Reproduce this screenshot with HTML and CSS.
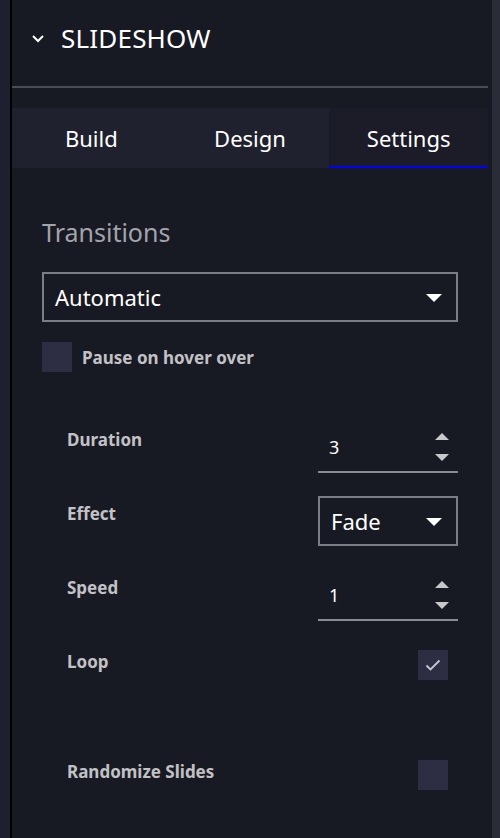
FILE: index.html
```html
<!DOCTYPE html>
<html lang="en">
<head>
    <meta charset="UTF-8">
    <meta name="viewport" content="width=device-width, initial-scale=1.0">
    <title>Slideshow</title>
    <link rel="stylesheet" href="styles.css">
</head>
<body>
    <div class="frame">
        <div class="rail"></div>
        <div class="panel">
            <div class="panel-header">
                <svg class="chevron" width="14" height="10" viewBox="0 0 14 10">
                    <path d="M2 2 L7 7 L12 2" fill="none" stroke="#fff" stroke-width="2"/>
                </svg>
                <span class="panel-title">SLIDESHOW</span>
            </div>
            <div class="divider"></div>

            <div class="tabs">
                <div class="tab">Build</div>
                <div class="tab">Design</div>
                <div class="tab active">Settings</div>
            </div>

            <div class="content">
                <h2 class="section-title">Transitions</h2>

                <div class="select wide">
                    <span>Automatic</span>
                    <span class="caret"></span>
                </div>

                <label class="check-line">
                    <span class="box"></span>
                    <span class="check-text">Pause on hover over</span>
                </label>

                <div class="options">
                    <div class="row">
                        <span class="row-label">Duration</span>
                        <div class="number">
                            <span>3</span>
                            <span class="spin"><span class="up"></span><span class="down"></span></span>
                        </div>
                    </div>
                    <div class="row">
                        <span class="row-label">Effect</span>
                        <div class="select small">
                            <span>Fade</span>
                            <span class="caret"></span>
                        </div>
                    </div>
                    <div class="row">
                        <span class="row-label">Speed</span>
                        <div class="number">
                            <span>1</span>
                            <span class="spin"><span class="up"></span><span class="down"></span></span>
                        </div>
                    </div>
                    <div class="row">
                        <span class="row-label">Loop</span>
                        <span class="box checked">
                            <svg width="16" height="12" viewBox="0 0 16 12">
                                <path d="M1.5 6.5 L5.5 10.5 L14.5 1.5" fill="none" stroke="#c8c8d0" stroke-width="1.8"/>
                            </svg>
                        </span>
                    </div>
                    <div class="row last">
                        <span class="row-label">Randomize Slides</span>
                        <span class="box"></span>
                    </div>
                </div>
            </div>
        </div>
        <div class="scroll"></div>
    </div>
</body>
</html>
```
FILE: styles.css
```css
body {
    margin: 0;
    background-color: #181a23;
    font-family: "Noto Sans", "Open Sans", sans-serif;
    color: #fff;
}

.frame {
    display: flex;
    height: 838px;
}

.rail {
    width: 10px;
    background-color: #1e2030;
    border-right: 2px solid #000;
}

.scroll {
    width: 8px;
    background-color: #2a2c38;
}

.panel {
    flex: 1;
    padding-right: 4px;
    background-color: #181a23;
}

.panel-header {
    display: flex;
    align-items: center;
    height: 76px;
    padding-left: 19px;
}

.chevron {
    margin-right: 16px;
    margin-top: 1px;
}

.panel-title {
    font-size: 26px;
    letter-spacing: 0.2px;
}

.divider {
    height: 2px;
    margin-top: 10px;
    background-color: #4a4b56;
}

.tabs {
    display: flex;
    margin-top: 20px;
    height: 60px;
    background-color: #20212e;
}

.tab {
    flex: 1;
    display: flex;
    align-items: center;
    justify-content: center;
    font-size: 22px;
    box-sizing: border-box;
}

.tab.active {
    background-color: #1b1c28;
    border-bottom: 2px solid #0000ff;
    padding-top: 2px;
}

.content {
    padding: 48px 30px 0 30px;
}

.section-title {
    margin: 0 0 24px 0;
    font-size: 25px;
    font-weight: normal;
    color: #a3a4ab;
    line-height: 32px;
}

.select {
    display: flex;
    align-items: center;
    justify-content: space-between;
    box-sizing: border-box;
    height: 50px;
    border: 2px solid #7b7c87;
    font-size: 22px;
    padding: 0 14px 0 11px;
}

.caret {
    width: 0;
    height: 0;
    border-left: 8px solid transparent;
    border-right: 8px solid transparent;
    border-top: 8px solid #fff;
    margin-top: 2px;
}

.select.small {
    width: 140px;
    padding-left: 11px;
}

.check-line {
    display: flex;
    align-items: center;
    margin-top: 20px;
}

.box {
    display: flex;
    align-items: center;
    justify-content: center;
    width: 30px;
    height: 30px;
    background-color: #2d2e44;
}

.check-text {
    margin-left: 10px;
    font-size: 17px;
    font-weight: bold;
    color: #c2c2c6;
}

.options {
    padding: 57px 10px 0 25px;
}

.row {
    display: flex;
    justify-content: space-between;
    align-items: flex-start;
    height: 74px;
}

.row.last {
    margin-top: 36px;
}

.row-label {
    font-size: 17px;
    font-weight: bold;
    color: #c2c2c6;
    line-height: 22px;
}

.number {
    display: flex;
    align-items: center;
    justify-content: space-between;
    box-sizing: border-box;
    width: 140px;
    height: 44px;
    margin-right: -10px;
    border-bottom: 2px solid #8a8b93;
    padding: 0 9px 6px 11px;
    font-size: 18px;
}

.spin {
    display: flex;
    flex-direction: column;
    gap: 14px;
}

.up,
.down {
    width: 0;
    height: 0;
    border-left: 7px solid transparent;
    border-right: 7px solid transparent;
}

.up {
    border-bottom: 7px solid #c8c8cc;
}

.down {
    border-top: 7px solid #c8c8cc;
}

.row .select.small {
    margin-top: -7px;
    margin-right: -10px;
}

.row .box {
    margin-top: -1px;
}
```
